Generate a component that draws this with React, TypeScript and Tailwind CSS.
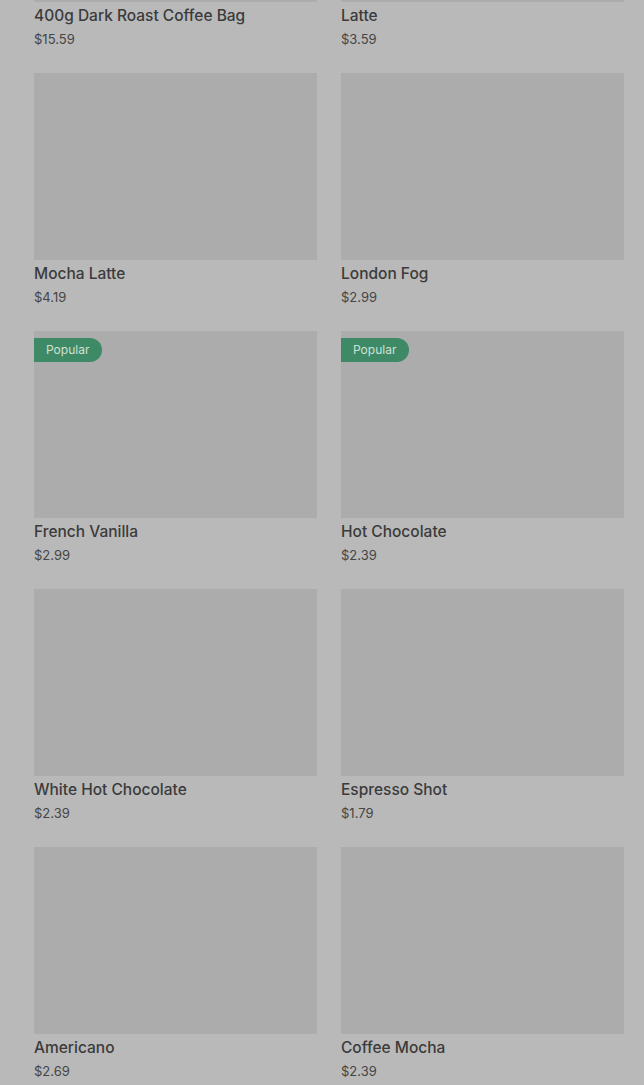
import React from 'react';

interface Product {
  name: string;
  price: string;
  popular?: boolean;
}

const products: Product[] = [
  { name: '400g Dark Roast Coffee Bag', price: '$15.59' },
  { name: 'Latte', price: '$3.59' },
  { name: 'Mocha Latte', price: '$4.19' },
  { name: 'London Fog', price: '$2.99' },
  { name: 'French Vanilla', price: '$2.99', popular: true },
  { name: 'Hot Chocolate', price: '$2.39', popular: true },
  { name: 'White Hot Chocolate', price: '$2.39' },
  { name: 'Espresso Shot', price: '$1.79' },
  { name: 'Americano', price: '$2.69' },
  { name: 'Coffee Mocha', price: '$2.39' },
];

function ProductCard({ product }: { product: Product }) {
  return (
    <div className="flex flex-col">
      <div className="relative h-[187px] bg-[#acacac]">
        {product.popular && (
          <span className="absolute left-0 top-[7px] h-[24px] pl-[12px] pr-[13px] flex items-center rounded-r-full bg-[#3f8a66] text-[12px] text-[#cfe0d6]">
            Popular
          </span>
        )}
      </div>
      <h3 className="mt-[3px] text-[15.5px] leading-[22px] font-medium text-[#3b3b3b]">
        {product.name}
      </h3>
      <p className="mt-[2px] text-[13px] leading-[20px] text-[#454545]">{product.price}</p>
    </div>
  );
}

export default function App() {
  return (
    <div className="h-[1085px] overflow-hidden bg-[#b9b9b9] font-['Inter',sans-serif]">
      <div className="pl-[34px] pr-[20px] -mt-[185px] grid grid-cols-2 gap-x-[24px] gap-y-[24px]">
        {products.map((p) => (
          <ProductCard key={p.name} product={p} />
        ))}
      </div>
    </div>
  );
}
